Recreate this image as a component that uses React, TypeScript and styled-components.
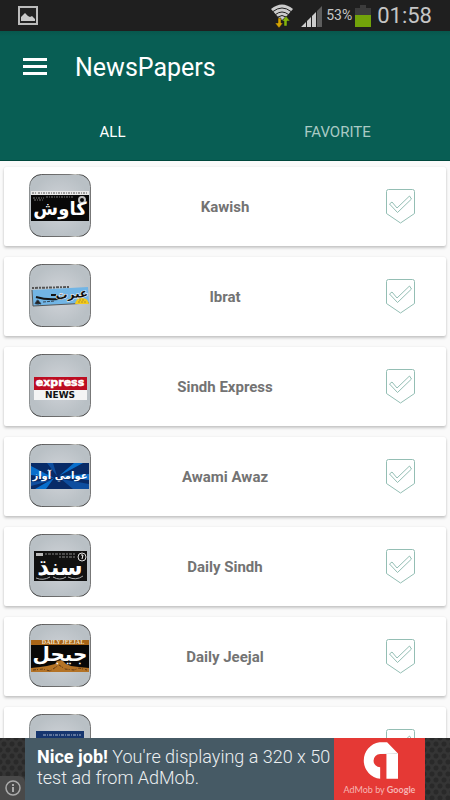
import React, { useId, useState } from "react";
import styled, { createGlobalStyle } from "styled-components";

const GlobalStyle = createGlobalStyle`
  * { box-sizing: border-box; }
  body { margin: 0; font-family: Roboto, "Liberation Sans", sans-serif; background: #fafafa; }
  button { font: inherit; border: 0; background: none; padding: 0; cursor: pointer; }
`;

const Screen = styled.div`
  display: flex;
  flex-direction: column;
  height: 100vh;
  overflow: hidden;
`;

const StatusBar = styled.div`
  display: flex;
  align-items: center;
  height: 31px;
  flex: none;
  padding: 0 18px;
  background: #1f1f1f;
  color: #c6c6c6;
`;

const StatusIcons = styled.div`
  display: flex;
  align-items: center;
  margin-left: auto;
`;

const SignalIcon = styled.svg`
  margin: 2px 4px 0 8px;
`;

const Percent = styled.span`
  font-size: 14px;
  line-height: 31px;
`;

const BatteryIcon = styled.svg`
  margin: 1px 6px 0 3px;
`;

const Clock = styled.span`
  font-size: 22px;
  line-height: 31px;
`;

const Header = styled.header`
  flex: none;
  background: linear-gradient(#07574c, #085e54 5px);
  border-bottom: 1px solid #00483d;
  color: #fff;
`;

const Toolbar = styled.div`
  display: flex;
  align-items: center;
  gap: 28px;
  height: 70px;
  padding: 0 23px;
`;

const MenuButton = styled.button`
  display: grid;
  color: #fff;
`;

const Title = styled.h1`
  margin: 4px 0 0;
  font-size: 25px;
  font-weight: 400;
  line-height: 32px;
`;

const Tabs = styled.div`
  display: grid;
  grid-template-columns: 1fr 1fr;
  height: 59px;
`;

const Tab = styled.button<{ $active: boolean }>`
  padding-top: 2px;
  color: ${(p) => (p.$active ? "#fff" : "#a9cac4")};
  font-size: 15px;
`;

const List = styled.ul`
  display: flex;
  flex-direction: column;
  flex: 1;
  min-height: 0;
  gap: 11px;
  margin: 0;
  padding: 6px 4px;
  overflow: hidden;
  list-style: none;
`;

const Card = styled.li`
  display: grid;
  grid-template-columns: 1fr auto 1fr;
  align-items: center;
  flex: none;
  height: 79px;
  padding: 0 31px 0 25px;
  border-radius: 2px;
  background: #fff;
  box-shadow: 0 2px 3px rgba(0, 0, 0, 0.2), 0 0 2px rgba(0, 0, 0, 0.08);
`;

const Name = styled.h2`
  margin: 0;
  padding-left: 6px;
  color: #737373;
  font-size: 15px;
  font-weight: 700;
  line-height: 20px;
`;

const FavoriteButton = styled.button`
  display: grid;
  justify-self: end;
`;

const Ad = styled.aside`
  display: flex;
  flex: none;
  height: 62px;
  background-color: #353535;
  background-image: radial-gradient(circle, #292929 2px, transparent 3px),
    radial-gradient(circle, #292929 2px, transparent 3px);
  background-size: 8px 12px;
  background-position: 0 0, 4px 6px;
`;

const InfoButton = styled.button`
  display: grid;
  place-items: center;
  align-self: flex-end;
  width: 25px;
  height: 24px;
  border-radius: 0 6px 0 0;
  background: #494949;
`;

const AdCopy = styled.p`
  flex: 1;
  margin: 0;
  padding: 8px 0 0 12px;
  background: #465a65;
  color: #eceff1;
  font-size: 18px;
  font-weight: 300;
  line-height: 21px;

  strong { font-weight: 700; color: #fff; }
`;

const AdLink = styled.a`
  display: flex;
  flex-direction: column;
  align-items: center;
  width: 91px;
  margin-right: 25px;
  padding-top: 4px;
  background: #e53935;
  color: #f6b5b3;
  font-family: Lato, sans-serif;
  font-size: 9px;
  line-height: 12px;
  text-decoration: none;
  white-space: nowrap;

  svg { margin-bottom: 5px; }
`;

type Paper = "kawish" | "ibrat" | "express" | "awami" | "sindh" | "jeejal" | "blue";

const arabic = { fontFamily: '"DejaVu Sans", sans-serif', fontWeight: 700, textAnchor: "middle" as const };

function Artwork({ paper }: { paper: Paper }) {
  switch (paper) {
    case "kawish":
      return (
        <g>
          <path d="M2 17h58v30H2z" fill="#080808" />
          <path d="M2 17h58v4H2z" fill="#e8e8e8" />
          <path d="M3 19h5M9 19h49" stroke="#555" strokeDasharray="2 1 1 1" />
          <path d="M4 24h11M17 23h27M5 26h9" stroke="#777" strokeDasharray="2 1 1 1" />
          <circle cx="53" cy="26" r="3" fill="none" stroke="#bbb" strokeWidth="2" />
          <text {...arabic} x="31" y="41" fontSize="18" fill="#fff">كاوش</text>
        </g>
      );
    case "ibrat":
      return (
        <g>
          <path d="M3 24l38-1" stroke="#555" strokeWidth="2" strokeDasharray="2 1 3 1" />
          <path d="M3 26l56-3 1 16-56 3z" fill="#72b5e5" />
          <path d="M3 26l1 16 56-3" fill="none" stroke="#555" />
          <path d="M7 33q10 3 22 2q4 0 6-2" fill="none" stroke="#141414" strokeWidth="2" />
          <path d="M22 31h5" stroke="#141414" strokeWidth="2" />
          <text {...arabic} x="43" y="34" fontSize="12" fill="#111" stroke="#fff" strokeWidth="1" paintOrder="stroke" transform="rotate(-4 43 34)">عبرت</text>
          <path d="M6 40l2-4 2 1 2 3zM14 38l12-1" fill="#222" stroke="#345" strokeDasharray="3 1" />
          <path d="M46 40q1-6 7-6t7 6z" fill="#f3c91b" />
          <path d="M50 36h6M49 38h9" stroke="#b39322" strokeDasharray="2 1" />
        </g>
      );
    case "express":
      return (
        <g fontFamily='"DejaVu Sans", sans-serif' fontWeight="700" textAnchor="middle">
          <path d="M5 23h53v13H5z" fill="#bd0d22" />
          <path d="M5 36h53v10H5z" fill="#f4f4f4" />
          <text x="31" y="32" fontSize="11" fill="#fff" stroke="#fff" strokeWidth="0.5">express</text>
          <text x="31" y="44" fontSize="9" fill="#111">NEWS</text>
        </g>
      );
    case "awami":
      return (
        <g>
          <path d="M2 19h58v26H2z" fill="#082b67" />
          <path d="M25 34L2 22v9zM25 34L6 45h11zM30 32L45 19h9zM30 32l30-2v6z" fill="#086fcc" />
          <path d="M28 32L18 19h6zM32 35l28 5v5H44zM24 36L2 38v4z" fill="#0e4e9f" />
          <text {...arabic} x="31" y="35" fontSize="10" fill="#fff">عوامي آواز</text>
        </g>
      );
    case "sindh":
      return (
        <g>
          <path d="M5 17h53v30H5z" fill="#111" />
          <path d="M7 19h7v3H7z" fill="#bbb" />
          <path d="M16 20h30M30 23h17" stroke="#888" strokeDasharray="2 1 3 1" />
          <circle cx="53" cy="23" r="4" fill="#111" stroke="#ddd" />
          <path d="M52 21h2l-1 4" stroke="#fff" fill="none" />
          <path d="M7 44q7 3 14-1M24 43q7 4 13 0M39 43q8 4 15-1" stroke="#aaa" fill="none" />
          <text {...arabic} x="31" y="41" fontSize="23" fill="#fff">سنڌ</text>
        </g>
      );
    case "jeejal":
      return (
        <g>
          <path d="M2 16h58v32H2z" fill="#080808" />
          <path d="M2 16h58v5H2z" fill="#a86518" />
          <text x="34" y="20" fontSize="6" fontFamily="Liberation Serif, serif" fontWeight="700" textAnchor="middle" fill="#f3e4c9">DAILY JEEJAL</text>
          <path d="M2 48v-4l9-1 7-1 8-2 2-3 5-1 4 4 5 2 8 1 10 1v4z" fill="#b47326" />
          <path d="M4 46l10-1 7 2 9-6 6 4 9 1 5-2 8 2" fill="none" stroke="#633b15" strokeDasharray="3 1 1 2" />
          <text {...arabic} x="31" y="37" fontSize="20" fill="#fff">جيجل</text>
        </g>
      );
    default:
      return (
        <g>
          <path d="M7 17h48v30H7z" fill="#16366f" />
          <path d="M14 21h38" stroke="#abb7cd" strokeDasharray="3 1 1 1" />
        </g>
      );
  }
}

function PaperLogo({ paper, label }: { paper: Paper; label: string }) {
  const id = useId();
  return (
    <svg width="62" height="65" viewBox="0 0 62 65" role="img" aria-label={`${label} logo`}>
      <defs>
        <radialGradient id={`${id}-face`}>
          <stop stopColor="#d2d5da" />
          <stop offset="1" stopColor="#b9c0c5" />
        </radialGradient>
        <linearGradient id={`${id}-rim`} x1="0" y1="0" x2="1" y2="0">
          <stop stopColor="#8d9192" />
          <stop offset="0.08" stopColor="#333" />
          <stop offset="0.25" stopColor="#666" />
          <stop offset="0.65" stopColor="#777" />
          <stop offset="0.75" stopColor="#c4c4bf" />
          <stop offset="0.9" stopColor="#333" />
          <stop offset="1" stopColor="#777" />
        </linearGradient>
      </defs>
      <rect x="0.5" y="0.5" width="61" height="62" rx="12" fill={`url(#${id}-face)`} stroke={`url(#${id}-rim)`} />
      <Artwork paper={paper} />
    </svg>
  );
}

function ShieldCheck({ filled }: { filled: boolean }) {
  return (
    <svg width="29" height="35" viewBox="0 0 29 35" fill="none" stroke="#94beb4">
      <path d="M2.500 0.500h24q2 0 2 2v22L14.500 34 0.500 24.500V2.500q0-2 2-2z" fill={filled ? "#d8ebe6" : "none"} />
      <path d="M3.500 15L6 13l5 6L23.500 7l2 3L11.500 23.500z" />
    </svg>
  );
}

const papers: { id: Paper; name: string }[] = [
  { id: "kawish", name: "Kawish" },
  { id: "ibrat", name: "Ibrat" },
  { id: "express", name: "Sindh Express" },
  { id: "awami", name: "Awami Awaz" },
  { id: "sindh", name: "Daily Sindh" },
  { id: "jeejal", name: "Daily Jeejal" },
  { id: "blue", name: "" },
];

export default function App() {
  const [tab, setTab] = useState<"all" | "favorite">("all");
  const [favorites, setFavorites] = useState<Paper[]>([]);
  const shown = tab === "all" ? papers : papers.filter((p) => favorites.includes(p.id));
  const toggle = (id: Paper) =>
    setFavorites((f) => (f.includes(id) ? f.filter((x) => x !== id) : [...f, id]));

  return (
    <Screen>
      <GlobalStyle />
      <StatusBar>
        <svg width="20" height="19" viewBox="0 0 20 19">
          <path d="M1 1h18v17H1z" fill="#222" stroke="#bcbcbc" strokeWidth="2" />
          <path d="M3 15v-4l4-4 3 3 2 1 2-1 3 3v2z" fill="#c9c9c9" />
        </svg>
        <StatusIcons>
          <svg width="22" height="24" viewBox="0 0 22 24">
            <path d="M0 5Q11-4 22 5L14 14l-3 2-3-2z" fill="#ccc" />
            <g fill="none" stroke="#1f1f1f">
              <path d="M2 7.500q9-7 18 0M4.500 10.500q6.500-5 13 0M7 13q4-3 8 0" />
            </g>
            <path d="M7 14h3v5h2l-4 5-4-5h3z" fill="#d6a400" stroke="#1f1f1f" strokeWidth="0.5" />
            <path d="M13 22v-5h-2l4-5 4 5h-3v5z" fill="#85b60a" stroke="#1f1f1f" strokeWidth="0.5" />
          </svg>
          <SignalIcon width="21" height="21" viewBox="0 0 21 21">
            <path d="M0 21l5-5v5zM6 21v-6l4-4v10zM11 21V10l4-4v15z" fill="#ccc" />
            <path d="M16 21V5l5-5v21z" fill="#5e5e5e" />
          </SignalIcon>
          <Percent>53%</Percent>
          <BatteryIcon width="16" height="22" viewBox="0 0 16 22">
            <path d="M5 0h6v3h5v7H0V3h5z" fill="#3c3c3c" />
            <path d="M0 10h16v12H0z" fill="#72a30a" />
          </BatteryIcon>
          <Clock>01:58</Clock>
        </StatusIcons>
      </StatusBar>

      <Header>
        <Toolbar>
          <MenuButton aria-label="Open menu">
            <svg width="24" height="17" viewBox="0 0 24 17" fill="currentColor">
              <path d="M0 0h24v3H0zM0 7h24v3H0zM0 14h24v3H0z" />
            </svg>
          </MenuButton>
          <Title>NewsPapers</Title>
        </Toolbar>
        <Tabs role="tablist">
          <Tab role="tab" aria-selected={tab === "all"} $active={tab === "all"} onClick={() => setTab("all")}>ALL</Tab>
          <Tab role="tab" aria-selected={tab === "favorite"} $active={tab === "favorite"} onClick={() => setTab("favorite")}>FAVORITE</Tab>
        </Tabs>
      </Header>

      <List>
        {shown.map((p) => (
          <Card key={p.id}>
            <PaperLogo paper={p.id} label={p.name} />
            <Name>{p.name}</Name>
            <FavoriteButton
              aria-label={`Favorite ${p.name}`}
              aria-pressed={favorites.includes(p.id)}
              onClick={() => toggle(p.id)}
            >
              <ShieldCheck filled={favorites.includes(p.id)} />
            </FavoriteButton>
          </Card>
        ))}
      </List>

      <Ad>
        <InfoButton aria-label="Ad information">
          <svg width="16" height="16" viewBox="0 0 16 16" fill="none" stroke="#aaa">
            <circle cx="8" cy="8" r="7" strokeWidth="1.500" />
            <path d="M8 7v5M8 4v2" strokeWidth="2" />
          </svg>
        </InfoButton>
        <AdCopy><strong>Nice job!</strong> You're displaying a 320 x 50 test ad from AdMob.</AdCopy>
        <AdLink href="#admob">
          <svg width="37" height="37" viewBox="407 126 112 111">
            <path d="M465 237A56 56 0 0 1 463 126H486L519 160V237H484V162H465a20 20 0 0 0 0 40z" fill="#fff" />
            <path d="M465 162h54l-3-3z" fill="#ddd" />
          </svg>
          <span>AdMob by <b>Google</b></span>
        </AdLink>
      </Ad>
    </Screen>
  );
}
